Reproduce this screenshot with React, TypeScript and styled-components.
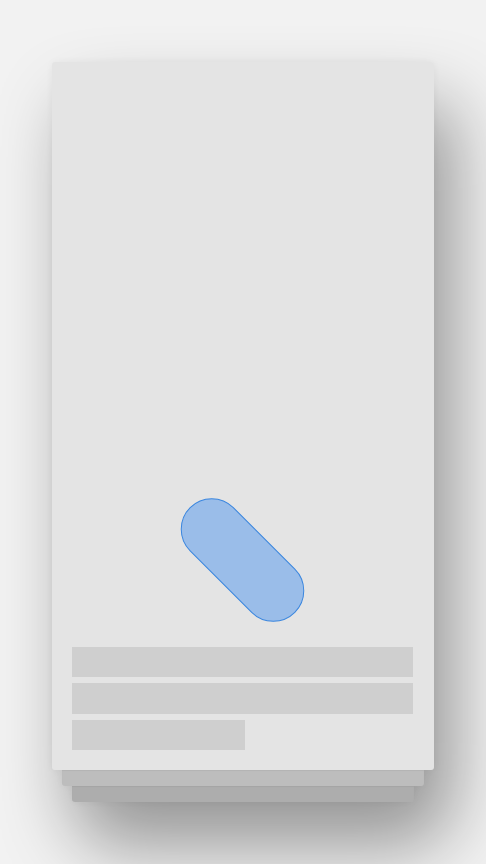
import React from "react";
import styled, { createGlobalStyle } from "styled-components";

const Global = createGlobalStyle`
  html, body { margin: 0; padding: 0; background: #f2f2f2; font-family: "Liberation Sans", Arial, sans-serif; }
  body { overflow: hidden; }
`;

const Stage = styled.div`
  width: 486px;
  height: 864px;
  display: flex;
  flex-direction: column;
  align-items: center;
  padding-top: 62px;
  box-sizing: border-box;
  background: #f2f2f2;
`;

const Stack = styled.div`
  display: flex;
  flex-direction: column;
  align-items: center;
  filter: drop-shadow(0 0 4px rgba(0, 0, 0, 0.05)) drop-shadow(20px 44px 36px rgba(0, 0, 0, 0.38));
`;

const Card = styled.div`
  position: relative;
  z-index: 3;
  width: 382px;
  height: 708px;
  background: #e4e4e4;
  border-radius: 3px;
  display: flex;
  flex-direction: column;
  box-sizing: border-box;
  padding: 0 21px 20px 20px;
`;

const Layer = styled.div<{ $inset: number; $tone: string; $z: number }>`
  position: relative;
  z-index: ${(p) => p.$z};
  width: ${(p) => 382 - p.$inset * 2}px;
  height: 16px;
  background: ${(p) => p.$tone};
  border-radius: 0 0 3px 3px;
  box-shadow: inset 0 1px 1px rgba(0, 0, 0, 0.05);
`;

const PillArea = styled.div`
  flex: 1;
  display: flex;
  align-items: flex-end;
  justify-content: center;
  padding-bottom: 56px;
`;

const Pill = styled.div`
  width: 149px;
  height: 62px;
  box-sizing: border-box;
  border-radius: 31px;
  background: #9abde9;
  border: 1.5px solid #3a86df;
  transform: rotate(45deg);
`;

const Lines = styled.div`
  display: flex;
  flex-direction: column;
  gap: 6px;
`;

const Line = styled.div<{ $w?: string }>`
  width: ${(p) => p.$w ?? "100%"};
  height: 30.5px;
  background: #cfcfcf;
`;

export default function App() {
  return (
    <>
      <Global />
      <Stage>
        <Stack>
          <Card>
            <PillArea>
              <Pill />
            </PillArea>
            <Lines>
              <Line />
              <Line />
              <Line $w="173px" />
            </Lines>
          </Card>
          <Layer $inset={10} $tone="#bdbdbd" $z={2} />
          <Layer $inset={20} $tone="#adadad" $z={1} />
        </Stack>
      </Stage>
    </>
  );
}
